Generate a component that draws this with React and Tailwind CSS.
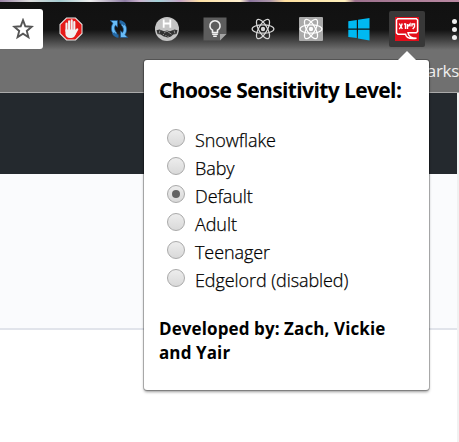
import { Fragment } from "react";

const levels = ["Snowflake", "Baby", "Default", "Adult", "Teenager", "Edgelord (disabled)"];

function StopHand() {
  return (
    <svg width="24" height="24" viewBox="0 0 24 24">
      <path d="M7.300.5h9.400l6.800 6.800v9.400l-6.800 6.800H7.300L.5 16.700V7.300z" fill="#e9e9e9" />
      <path d="M7.800 1.500h8.400l6.300 6.300v8.400l-6.300 6.300H7.800l-6.300-6.300V7.800z" fill="#e51a18" />
      <g stroke="#f1f1f1" strokeWidth="2.100" strokeLinecap="round" fill="none">
        <path d="M7.500 6.500V14M10.100 4.300V13M12.700 3.400V13M15.300 5V14M18.300 12.300l-2.800 5" />
      </g>
      <path d="M6.450 12.500h9.900l1.300.8-1.500 5c-.8 1.700-2 2.700-3.800 2.700h-1.400c-2.700 0-4.500-1.700-4.500-4z" fill="#f1f1f1" />
    </svg>
  );
}

function Sync() {
  return (
    <svg width="20" height="20" viewBox="0 0 20 20" className="overflow-visible">
      <path d="M1.200 1.500h7.300v6.700L6.500 6.300C4.900 8.700 5.400 11.500 8 14.200l-2 2.600C1.900 13.300 1.300 8.300 4 4.300z" fill="#68bcf8" stroke="#1b5288" strokeWidth=".7" />
      <path d="M18.800 18.500h-7.300v-6.700l2 1.900c1.600-2.400 1.100-5.200-1.500-7.900l2-2.600c4.100 3.500 4.700 8.500 2 12.500z" fill="#68bcf8" stroke="#1b5288" strokeWidth=".7" />
      <path d="M10.500 1.300c2.800 0 5.300 1.700 6.500 4.200l-2.600 1.300c-.9-1.500-2-2.100-3.900-2.200z" fill="#2368a5" />
      <path d="M9.500 18.700c-2.800 0-5.300-1.700-6.500-4.200l2.600-1.300c.9 1.500 2 2.100 3.900 2.200z" fill="#2368a5" />
    </svg>
  );
}

function Handshake() {
  return (
    <svg width="24" height="24" viewBox="0 0 24 24">
      <circle cx="12" cy="12" r="12" fill="#c4c4c4" />
      <path d="M8.700 2.500v8.300M15.300 2.500v8.300M8.700 6.500h6.600" stroke="#fff" strokeWidth="1.800" fill="none" />
      <path d="M1.500 13.200l3-.7 4.500 1.800 3-.9 3 .9 4.500-1.800 3 .7-1 3.800-3.300.6-2.200 1.800-3.200 1.200-4-1-3.200-2-3-.6z" fill="#333" />
      <path d="M5 13.500l-1 3M19 13.500l1 3M9 15.500l3-1.300 4.500 3M8 18l1-1.200M10.300 19.300l1-1.300M12.700 20l.7-1.100" stroke="#aaa" strokeWidth=".8" fill="none" />
    </svg>
  );
}

function Keep() {
  return (
    <svg width="24" height="24" viewBox="0 0 24 24">
      <path d="M.5.5h23V17l-6.500 6.500H.5z" fill="#5d5d5d" />
      <path d="M17 17h6.500L17 23.500z" fill="#a4a4a4" />
      <path d="M9.500 15.500v-2.200a5.100 5.100 0 1 1 5 0v2.200z" fill="none" stroke="#f2f2f2" strokeWidth="1.600" />
      <path d="M9.200 17.200h5.600M10.200 19.200h3.600" stroke="#f2f2f2" strokeWidth="1.500" />
    </svg>
  );
}

function Atom({ boxed }) {
  return (
    <svg width="24" height="24" viewBox="0 0 24 24">
      {boxed && <rect width="24" height="24" rx="1" fill="#aaa" />}
      <g fill="none" stroke={boxed ? "#fff" : "#d7d7d7"} strokeWidth="1.200">
        <ellipse cx="12" cy="12" rx="10.900" ry="4.200" />
        <ellipse cx="12" cy="12" rx="10.900" ry="4.200" transform="rotate(60 12 12)" />
        <ellipse cx="12" cy="12" rx="10.900" ry="4.200" transform="rotate(120 12 12)" />
      </g>
      <circle cx="12" cy="12" r="2.200" fill={boxed ? "#fff" : "#d7d7d7"} />
    </svg>
  );
}

function Windows() {
  return (
    <svg width="24" height="24" viewBox="0 0 24 24" fill="#00b9f2">
      <path d="M1.300 4.200l8.500-1.200v8.500H1.300zM11 2.800L22.500 1v10.500H11zM1.300 12.700h8.500v8.400l-8.500-1.200zM11 12.700h11.500v10.700L11 21.400z" />
    </svg>
  );
}

function Speech() {
  return (
    <svg width="24" height="24" viewBox="0 0 24 24">
      <rect width="24" height="24" fill="#e30e1b" />
      <path d="M10.500 17.200H3L1.500 15.800V3L2.800 1.700h18.500L22.600 3v11.500l-1.300 1.300H13c.3 3 2.500 5.200 8.500 5.500-7 1-10.500-.7-11-4.100z" fill="none" stroke="#fff" strokeWidth="1.500" />
      <path d="M4.300 6.500l3 5.500M7.200 6.500L6.300 9.300 4.300 12M9 7h1.500v5M12.500 7v5M12.500 9.700L15 7v2.500M17 9.500V7h2.500v2.700l-1.800 2.500" stroke="#fff" strokeWidth="1.400" fill="none" />
    </svg>
  );
}

const extensions = [StopHand, Sync, Handshake, Keep, Atom, () => <Atom boxed />, Windows];

export default function App() {
  return (
    <div className="relative flex h-[442px] w-[459px] flex-col overflow-hidden bg-white font-['Open_Sans','Noto_Sans',sans-serif] text-black">
      <div className="h-0.5 shrink-0 bg-[linear-gradient(90deg,#9a83a5_0px,#ddd_30px,#a4cbd0_60px,#eee_90px,#8e7da3_125px,#cbb4cf_140px,#a4d2d8_158px,#c5a5c5_180px,#ffe2a6_200px,#fff0d0_240px,#8b759d_250px,#ac96a9_270px,#ffe0a0_285px,#fff0bc_345px,#9c718d_355px,#ba89a2_459px)]" />
      <div className="flex h-12 shrink-0 bg-[linear-gradient(180deg,#111_0px,#131313_28px,#707070_48px)]">
        <div className="mt-[7px] flex h-10 w-[43px] shrink-0 items-center justify-end rounded-r-[3px] bg-white pr-[9px]">
          <svg width="22" height="22" viewBox="0 0 22 22">
            <path d="M11 2.200l2.300 6.100 6.500.4-5 4.200 1.600 6.300-5.400-3.500-5.400 3.500 1.600-6.300-5-4.200 6.500-.4z" fill="none" stroke="#555" strokeWidth="1.900" />
          </svg>
        </div>
        <div className="ml-1 mt-[3px] flex h-12">
          {extensions.map((Icon, i) => (
            <div key={i} className="flex w-12 items-center justify-center">
              <Icon />
            </div>
          ))}
          <div className="ml-1.5 mt-1.5 flex size-9 items-center justify-center rounded-[2px] bg-[#383838]">
            <Speech />
          </div>
          <div className="ml-[27px] flex flex-col items-center justify-center gap-[3px]">
            {[0, 1, 2].map((i) => (
              <span key={i} className="size-[5px] rounded-full bg-[#eee]" />
            ))}
          </div>
        </div>
      </div>
      <div className="flex h-[43px] shrink-0 justify-end border-b border-[#aaa] bg-[#707070] pt-[9px] text-[17px] leading-6 tracking-[-0.3px] text-[#eee]">
        arks
      </div>
      <div className="flex min-h-0 flex-1">
        <div className="flex flex-1 flex-col">
          <div className="h-[81px] bg-[#24292e]" />
          <div className="h-[156px] border-b-2 border-[#e1e4eb] bg-[#fafbfd]" />
        </div>
        <div className="w-0.5 bg-[#f1f1f1]" />
      </div>

      <div className="absolute left-36 top-[60px] flex h-[330px] w-[285px] flex-col rounded-[3px] bg-white pl-[15px] shadow-[0_0_0_1px_rgba(0,0,0,0.23),0_2px_3px_rgba(0,0,0,0.4)]">
        <svg className="absolute -top-[9px] left-[253px]" width="20" height="10" viewBox="0 0 20 10">
          <path d="M0 10l10-10 10 10z" fill="#fff" />
        </svg>
        <h1 className="mt-4 h-12 whitespace-nowrap text-[21px] font-bold leading-7 tracking-[-0.61px]">
          Choose Sensitivity Level:
        </h1>
        <div className="grid grid-cols-[18px_1fr] gap-x-2.5 pl-2">
          {levels.map((level, i) => (
            <Fragment key={level}>
              <div className="flex h-7 items-center">
                <span className="flex size-[18px] items-center justify-center rounded-full border border-[#a9a9a9] bg-linear-to-b from-[#ededed] to-[#d9d9d9]">
                  {i === 2 && <span className="size-2 rounded-full bg-[#636363]" />}
                </span>
              </div>
              <div className="h-7 whitespace-nowrap pt-0.5 text-[18px] font-light leading-7 tracking-[-0.08px] [-webkit-text-stroke:0.25px_black]">{level}</div>
            </Fragment>
          ))}
        </div>
        <p className="mt-[25px] whitespace-nowrap text-[17px] font-bold leading-6 tracking-[0.1px]">
          Developed by: Zach, Vickie
          <br />
          and Yair
        </p>
      </div>
    </div>
  );
}
